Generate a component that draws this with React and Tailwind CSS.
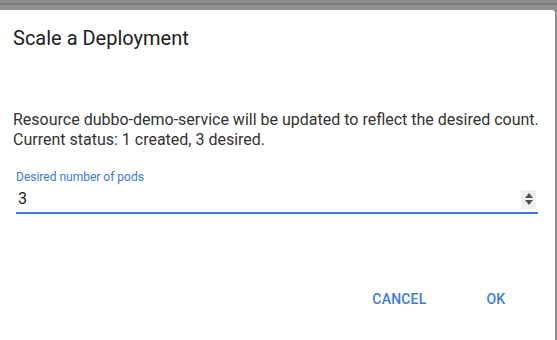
import React, { useState } from 'react';

const App = () => {
  const [count, setCount] = useState('3');

  return (
    <div className="w-[557px] h-[340px] bg-[#8a8a8a] flex flex-col overflow-hidden" style={{ fontFamily: 'Roboto, "Liberation Sans", sans-serif' }}>
      <div className="h-[10px] shrink-0 flex flex-col">
        <div className="h-[3px] bg-[#8c8c8c]" />
        <div className="h-[2px] bg-[#7a7a7a]" />
        <div className="flex-1 bg-[#8f8f8f]" />
      </div>
      <div className="flex-1 flex">
        <div className="w-[555px] bg-white rounded-tr-[3px] flex flex-col">
          <h2 className="text-[20px] text-[#212121] px-[13px] pt-[16px] leading-[24px]">Scale a Deployment</h2>

          <div className="mt-[60px] px-[13px] text-[16px] leading-[20px] text-[#333333]">
            <p>Resource dubbo-demo-service will be updated to reflect the desired count.</p>
            <p>Current status: 1 created, 3 desired.</p>
          </div>

          <div className="mt-[20px] ml-[16px] w-[522px]">
            <label className="block text-[12px] leading-[14px] text-[#3b78e7]">Desired number of pods</label>
            <div className="flex items-center border-b-2 border-[#3b78e7] h-[30px] pt-[2px]">
              <input
                type="text"
                value={count}
                onChange={(e) => setCount(e.target.value)}
                className="flex-1 outline-none text-[16px] text-[#212121] pl-[2px] bg-transparent"
              />
              <div className="w-[15px] h-[19px] bg-[#efefef] flex flex-col items-center justify-center gap-[2px] mr-[2px]">
                <svg width="8" height="5" viewBox="0 0 8 5"><path d="M0 5 L4 0 L8 5 Z" fill="#505050" /></svg>
                <svg width="8" height="5" viewBox="0 0 8 5"><path d="M0 0 L4 5 L8 0 Z" fill="#505050" /></svg>
              </div>
            </div>
          </div>

          <div className="mt-auto mb-[30px] flex justify-end items-center pr-[50px] gap-[60px] text-[14px] font-medium text-[#3e7be0]">
            <button className="tracking-[0.2px]">CANCEL</button>
            <button>OK</button>
          </div>
        </div>
      </div>
    </div>
  );
};

export default App;
